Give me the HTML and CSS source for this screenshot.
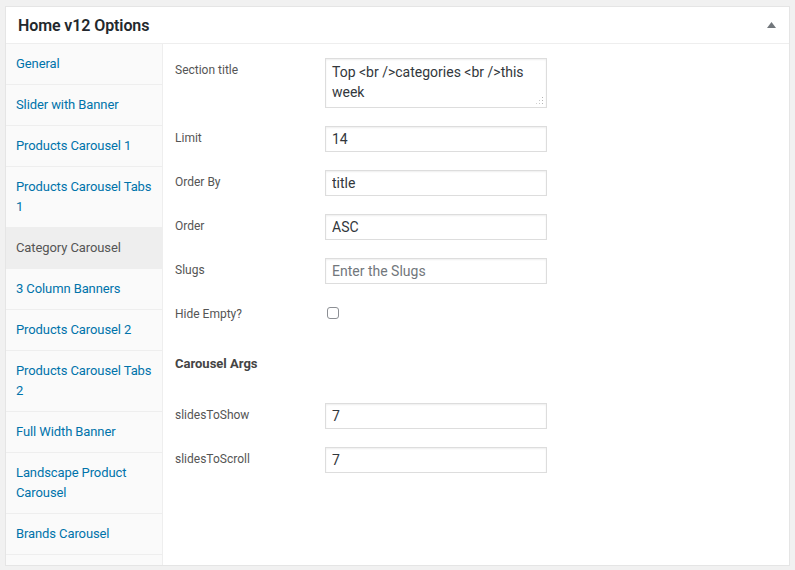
FILE: index.html
```html
<!DOCTYPE html>
<html lang="en">
<head>
<meta charset="utf-8">
<title>Home v12 Options</title>
<link rel="stylesheet" href="styles.css">
</head>
<body>
<div class="postbox">
  <div class="postbox-header">
    <h2 class="hndle">Home v12 Options</h2>
    <button class="toggle" type="button" aria-label="Toggle panel">
      <svg width="9" height="6" viewBox="0 0 9 6"><polygon points="4.5,0 9,6 0,6" fill="#72777c"/></svg>
    </button>
  </div>
  <div class="inside">
    <ul class="tabs">
      <li><a href="#">General</a></li>
      <li><a href="#">Slider with Banner</a></li>
      <li><a href="#">Products Carousel 1</a></li>
      <li><a href="#">Products Carousel Tabs 1</a></li>
      <li class="active"><a href="#">Category Carousel</a></li>
      <li><a href="#">3 Column Banners</a></li>
      <li><a href="#">Products Carousel 2</a></li>
      <li><a href="#">Products Carousel Tabs 2</a></li>
      <li><a href="#">Full Width Banner</a></li>
      <li><a href="#">Landscape Product Carousel</a></li>
      <li><a href="#">Brands Carousel</a></li>
    </ul>
    <div class="panel">
      <div class="field">
        <label class="label">Section title</label>
        <span class="textarea-wrap">
          <textarea class="textarea">Top <br />categories <br />this week</textarea>
          <svg class="grip" width="8" height="8" viewBox="0 0 8 8">
            <rect x="6" y="0" width="1" height="1" fill="#b4b4b4"/>
            <rect x="6" y="3" width="1" height="1" fill="#b4b4b4"/>
            <rect x="3" y="3" width="1" height="1" fill="#c8c8c8"/>
            <rect x="6" y="6" width="1" height="1" fill="#b4b4b4"/>
            <rect x="3" y="6" width="1" height="1" fill="#c8c8c8"/>
            <rect x="0" y="6" width="1" height="1" fill="#d2d2d2"/>
          </svg>
        </span>
      </div>
      <div class="field">
        <label class="label">Limit</label>
        <input class="input" type="text" value="14">
      </div>
      <div class="field">
        <label class="label">Order By</label>
        <input class="input" type="text" value="title">
      </div>
      <div class="field">
        <label class="label">Order</label>
        <input class="input" type="text" value="ASC">
      </div>
      <div class="field">
        <label class="label">Slugs</label>
        <input class="input" type="text" placeholder="Enter the Slugs">
      </div>
      <div class="field field-check">
        <label class="label">Hide Empty?</label>
        <span class="checkbox"></span>
      </div>
      <h3 class="group-title">Carousel Args</h3>
      <div class="field">
        <label class="label">slidesToShow</label>
        <input class="input" type="text" value="7">
      </div>
      <div class="field">
        <label class="label">slidesToScroll</label>
        <input class="input" type="text" value="7">
      </div>
    </div>
  </div>
</div>
</body>
</html>
```

FILE: styles.css
```css
html, body {
  margin: 0;
  padding: 0;
  background: #f1f1f1;
  font-family: Roboto, "Liberation Sans", sans-serif;
}

.postbox {
  margin: 6px 5px 0 5px;
  height: 560px;
  box-sizing: border-box;
  background: #fff;
  border: 1px solid #e5e5e5;
  display: flex;
  flex-direction: column;
}

.postbox-header {
  height: 36px;
  border-bottom: 1px solid #eee;
  display: flex;
  align-items: center;
  justify-content: space-between;
  padding: 0 12px;
  flex-shrink: 0;
}

.hndle {
  margin: 0;
  font-size: 16px;
  font-weight: 600;
  color: #23282d;
  letter-spacing: -0.1px;
}

.toggle {
  border: 0;
  background: none;
  padding: 0;
  margin-right: 1px;
  display: flex;
  align-items: center;
}

.inside {
  flex: 1;
  display: flex;
  min-height: 0;
}

.tabs {
  list-style: none;
  margin: 0;
  padding: 0;
  width: 156px;
  background: #fafafa;
  border-right: 1px solid #eee;
  flex-shrink: 0;
}

.tabs li {
  border-bottom: 1px solid #eee;
  padding: 10px 3px 10px 10px;
  font-size: 13px;
  line-height: 20px;
  letter-spacing: -0.1px;
}

.tabs a {
  color: #0073aa;
  text-decoration: none;
}

.tabs li.active {
  background: #eee;
}

.tabs li.active a {
  color: #555;
}

.panel {
  flex: 1;
  padding: 14px 12px 0 12px;
}

.field {
  display: flex;
  align-items: flex-start;
  margin-bottom: 18px;
}

.label {
  width: 150px;
  flex-shrink: 0;
  font-size: 12px;
  line-height: 22px;
  padding-top: 1px;
  color: #555;
}

.input, .textarea {
  box-sizing: border-box;
  width: 222px;
  border: 1px solid #ddd;
  box-shadow: inset 0 1px 2px rgba(0, 0, 0, 0.07);
  background: #fff;
  color: #32373c;
  font-family: Roboto, "Liberation Sans", sans-serif;
  font-size: 14px;
  margin: 0;
  border-radius: 0;
  outline: none;
}

.input {
  height: 26px;
  padding: 0 6px;
}

.input::placeholder {
  color: #72777c;
}

.textarea-wrap {
  position: relative;
  display: block;
}

.textarea {
  height: 50px;
  padding: 3px 6px;
  line-height: 20px;
  resize: none;
  overflow: hidden;
  display: block;
}

.grip {
  position: absolute;
  right: 3px;
  bottom: 3px;
}

.field-check {
  height: 26px;
}

.checkbox {
  display: block;
  width: 12px;
  height: 12px;
  box-sizing: border-box;
  border: 1px solid #8c8f94;
  border-radius: 3px;
  background: #fff;
  margin-top: 5px;
  margin-left: 2px;
}

.group-title {
  margin: 0 0 18px 0;
  padding: 8px 0 11px 0;
  font-size: 13px;
  line-height: 20px;
  font-weight: 700;
  color: #444;
}
```
